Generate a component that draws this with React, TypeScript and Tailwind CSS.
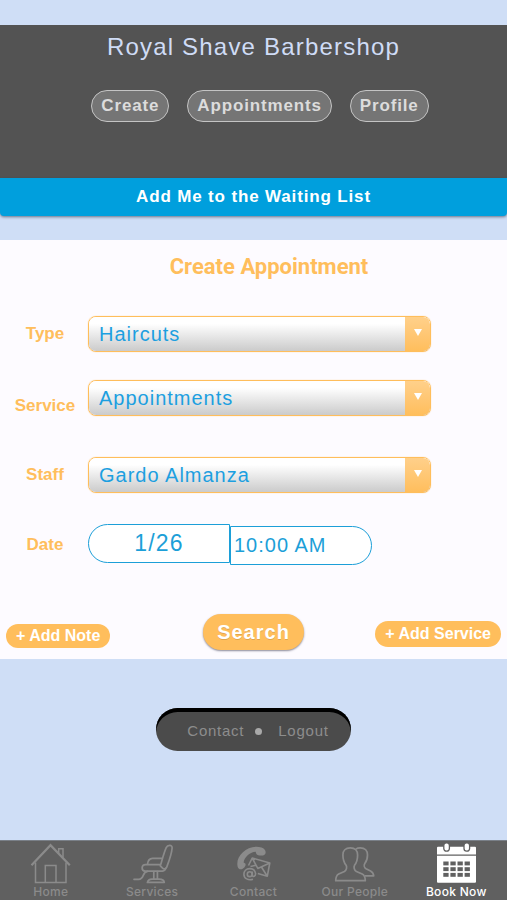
import type { ReactNode } from "react";

const sans = "font-['Liberation_Sans',Arial,sans-serif]";

function HomeIcon() {
  return (
    <svg viewBox="0 0 41 41" className="h-[41px] w-[41px]" fill="none" stroke="currentColor" strokeWidth="1.5" aria-hidden="true">
      <path d="M1.5 22.3 20.5 2.2 39.8 22.3" strokeWidth="2.2" />
      <path d="M5.5 19.5V39.6H36V19.5M15.3 39.6V22.5H26V39.6M28.7 10V5.8H33V14.5" />
    </svg>
  );
}

function ChairIcon() {
  return (
    <svg viewBox="0 0 41 41" className="h-[41px] w-[41px]" fill="none" stroke="currentColor" strokeWidth="1.7" strokeLinecap="round" strokeLinejoin="round" aria-hidden="true">
      <path d="M34.2 4.6C35.4 1.8 40.4 1.2 40.1 5.2C39.6 11.5 36.8 18.5 34.6 24.4C33.6 26.2 31.8 26.4 30.6 25.2L28.3 22.8C30 17.5 31.8 10 34.2 4.6Z" />
      <path d="M28 21.6H13.5C9.2 21.6 9 27.9 13 28.2H30.5C32.5 28 33.5 26.8 33.8 25.2M15.5 21.3C15.8 17.5 17.6 15.6 20.5 15.4H29.8" />
      <path d="M21.8 28.5V35.6M25.4 28.5V35.6M15.4 39.4C16 37 18 36.3 20 36.2H27C29.5 36.3 32 37 32.3 39.4Z" />
      <path d="M2 36.3H6.5C13 36.3 9.5 29 15.5 28.3" />
    </svg>
  );
}

function ContactIcon() {
  return (
    <svg viewBox="0 0 41 41" className="h-[41px] w-[41px]" fill="none" stroke="currentColor" strokeWidth="1.6" strokeLinejoin="round" aria-hidden="true">
      <path fill="currentColor" d="M4.6 23.5C2.2 12.5 15.5.8 28.5 4.5C32.2 5.6 33.8 9.2 31.8 11.4C29.6 13.2 24.8 12.8 23.4 10.9L22.6 8.8C17.5 8.8 11.2 14 10.6 19.5L12.3 20.4C13.6 22.4 10.8 25.9 8.7 26.3C6.3 26.6 5.1 25.5 4.6 23.5Z" stroke="none" />
      <path d="M15.5 22.5 19.2 15 36.8 20 34.3 33.2 24.8 30.6M19.2 15 24.8 25.4 36.8 20M34.3 33.2 28.6 24.2M22.8 22.2 17.5 23.5" />
      <circle cx="16.7" cy="31.2" r="2.4" />
      <path d="M19.3 28.5V32.2C19.4 34.4 22.6 33.6 22.6 30.7C22.2 27.4 19.8 25.6 16.7 25.6C13.2 25.6 10.9 28 10.9 31.2C10.9 35.4 15.2 37.8 20 36.2" />
    </svg>
  );
}

function PeopleIcon() {
  return (
    <svg viewBox="0 0 41 41" className="h-[41px] w-[41px]" fill="none" stroke="currentColor" strokeWidth="1.7" strokeLinejoin="round" aria-hidden="true">
      <path d="M16.3 4.8C11.5 4.8 8.8 7.6 8.9 11.9C8.9 16.5 10.4 20 12.1 22.3C13.1 24 12.7 27 10.4 28.4L4.7 31.1C2.5 32.2 1.8 34.5 1.7 37.7H31.3C31.2 34.5 30.3 32.2 28.2 31.1L22.4 28.4C20 27 19.6 24 20.5 22.3C22.3 20 23.6 16.5 23.6 11.9C23.6 7.6 21.2 4.8 16.3 4.8Z" />
      <path d="M21.8 6.1C23 5.2 24.5 4.8 26.2 4.8C31 4.8 33.6 7.6 33.5 11.9C33.5 15.5 32.4 18.5 30.8 20.5C29.7 22.3 30.2 24.6 32 25.7L36.5 28C38.7 29.2 39.5 30.5 39.7 32.8H30.7" />
    </svg>
  );
}

function CalendarIcon() {
  return (
    <svg viewBox="0 0 41 41" className="h-[41px] w-[41px]" aria-hidden="true">
      <path fill="currentColor" d="M1 4.8Q1 3.8 2 3.8H39Q40 3.8 40 4.8V11.4H1ZM1 12.7H40V38.8Q40 39.8 39 39.8H2Q1 39.8 1 38.8Z" />
      <g fill="currentColor" stroke="#606060" strokeWidth="1.3">
        <rect x="7.8" y="-.2" width="5.6" height="8.4" rx="2.6" />
        <rect x="28" y="-.2" width="5.6" height="8.4" rx="2.6" />
      </g>
      <g fill="#606060">
        {[18.5, 24.2, 29.9].map((y) =>
          [7.3, 14.4, 21.5, 28.6].map((x) => <rect key={`${x}-${y}`} x={x} y={y} width="5.3" height="3.9" />)
        )}
      </g>
    </svg>
  );
}

type RowProps = { id: string; label: string; low?: boolean; children: ReactNode };

function Row({ id, label, low, children }: RowProps) {
  return (
    <div className={low ? "flex items-end" : "flex items-center"}>
      <label htmlFor={id} className="w-[88px] shrink-0 pl-[2px] text-center text-[17px] leading-5 font-bold text-[#ffbe5c]">
        {label}
      </label>
      {children}
    </div>
  );
}

function SelectField({ id, label, value, low }: { id: string; label: string; value: string; low?: boolean }) {
  return (
    <Row id={id} label={label} low={low}>
      <div className="relative mr-[76px] h-9 flex-1 overflow-hidden rounded-lg border border-[#ffbe5c] shadow-[0_0_1px_#ffbe5c]">
        <select
          id={id}
          className="h-full w-full appearance-none bg-linear-to-b from-white from-20% to-[#cbcbcb] pr-8 pl-[10px] text-[20px] tracking-wider text-[#1c9fe0] outline-none"
        >
          <option>{value}</option>
        </select>
        <span className="pointer-events-none absolute inset-y-0 right-0 flex w-[25px] items-center justify-center bg-linear-to-b from-[#ffd08a] to-[#ffbe5c]">
          <svg viewBox="0 0 8 7" className="mb-1 h-[7px] w-2" fill="#fff" aria-hidden="true">
            <path d="M0 0H8L4 7Z" />
          </svg>
        </span>
      </div>
    </Row>
  );
}

const pages = ["Create", "Appointments", "Profile"];

const tabs = [
  { label: "Home", icon: <HomeIcon /> },
  { label: "Services", icon: <ChairIcon /> },
  { label: "Contact", icon: <ContactIcon /> },
  { label: "Our People", icon: <PeopleIcon /> },
  { label: "Book Now", icon: <CalendarIcon />, active: true },
];

export default function App() {
  return (
    <div className={`flex min-h-screen flex-col bg-[#cfdef6] pt-[25px] ${sans}`}>
      <header className="flex h-[153px] flex-col items-center bg-[#535353] pt-2">
        <h1 className="text-[24px] leading-7 tracking-wider text-[#cfdcf6]">Royal Shave Barbershop</h1>
        <nav className="mt-[29px] flex gap-[18px] pl-[13px]">
          {pages.map((page) => (
            <button
              key={page}
              type="button"
              className="h-8 rounded-full border border-[#c4c4c4] bg-[#757575] px-[9px] text-[17px] font-bold tracking-wider text-[#dcdcdc]"
            >
              {page}
            </button>
          ))}
        </nav>
      </header>

      <button
        type="button"
        className="h-[38px] w-full rounded-b-sm bg-[#009fdd] text-[17px] font-bold tracking-wider text-white shadow-[0_1px_3px_rgba(60,70,90,0.7)]"
      >
        Add Me to the Waiting List
      </button>

      <main className="mt-6 bg-[#fdfbff] pt-[15px] pb-[9px]">
        <h2 className="pl-[31px] text-center font-[Roboto,sans-serif] text-[22px] leading-6 font-bold text-[#ffbe5c]">
          Create Appointment
        </h2>
        <form onSubmit={(event) => event.preventDefault()}>
          <div className="mt-[37px] flex flex-col">
            <SelectField id="type" label="Type" value="Haircuts" />
            <div className="mt-7">
              <SelectField id="service" label="Service" value="Appointments" low />
            </div>
            <div className="mt-[41px]">
              <SelectField id="staff" label="Staff" value="Gardo Almanza" />
            </div>
            <div className="mt-[31px]">
              <Row id="date" label="Date">
                <div className="flex">
                  <input
                    id="date"
                    type="text"
                    defaultValue="1/26"
                    className="mb-[2px] h-[39px] w-[142px] rounded-l-full border border-[#1c9fd8] bg-white text-center text-[23px] tracking-wider text-[#1c9fd8] outline-none"
                  />
                  <input
                    type="text"
                    aria-label="Time"
                    defaultValue="10:00 AM"
                    className="mt-[2px] h-[39px] w-[142px] rounded-r-full border border-[#1c9fd8] bg-white pl-[3px] text-[20px] tracking-wider text-[#1c9fd8] outline-none"
                  />
                </div>
              </Row>
            </div>
          </div>

          <div className="mt-[49px] grid grid-cols-[1fr_auto_1fr] items-center px-[6px]">
            <button type="button" className="mt-2 h-6 justify-self-start rounded-full bg-[#ffbe5c] px-[10px] text-[16px] leading-6 font-bold text-white">
              + Add Note
            </button>
            <button
              type="submit"
              className="h-[36px] rounded-full bg-[#ffbe5c] px-[14px] text-[20px] font-bold tracking-wider text-white shadow-[0_1px_2px_rgba(90,90,110,0.7)] text-shadow-2xs"
            >
              Search
            </button>
            <button type="button" className="mt-1 h-[26px] justify-self-end rounded-full bg-[#ffbe5c] px-[10px] text-[16px] leading-[26px] font-bold text-white">
              + Add Service
            </button>
          </div>
        </form>
      </main>

      <div className="mt-[49px] mb-12 flex justify-center">
        <nav className="flex h-[43px] items-center rounded-full bg-[#4b4b4b] pt-1 pr-[22px] pl-[31px] text-[15px] tracking-wider text-[#8d8d8d] shadow-[inset_0_4px_0_#000]">
          <a href="#contact">Contact</a>
          <span className="mx-[11px] h-[7px] w-[7px] rounded-full bg-[#a9a9a9]" />
          <a href="#logout" className="pl-[5px]">Logout</a>
        </nav>
      </div>

      <nav className="mt-auto grid h-[60px] grid-cols-5 border-t border-[#7a8088] bg-[#606060]">
        {tabs.map((tab) => (
          <a
            key={tab.label}
            href="#tab"
            aria-current={tab.active ? "page" : undefined}
            className={`flex flex-col items-center pt-[2px] ${tab.active ? "text-white" : "text-[#8b8b8b]"}`}
          >
            {tab.icon}
            <span className="font-[Inter,sans-serif] text-[12px] leading-4 font-medium tracking-wide">{tab.label}</span>
          </a>
        ))}
      </nav>
    </div>
  );
}
